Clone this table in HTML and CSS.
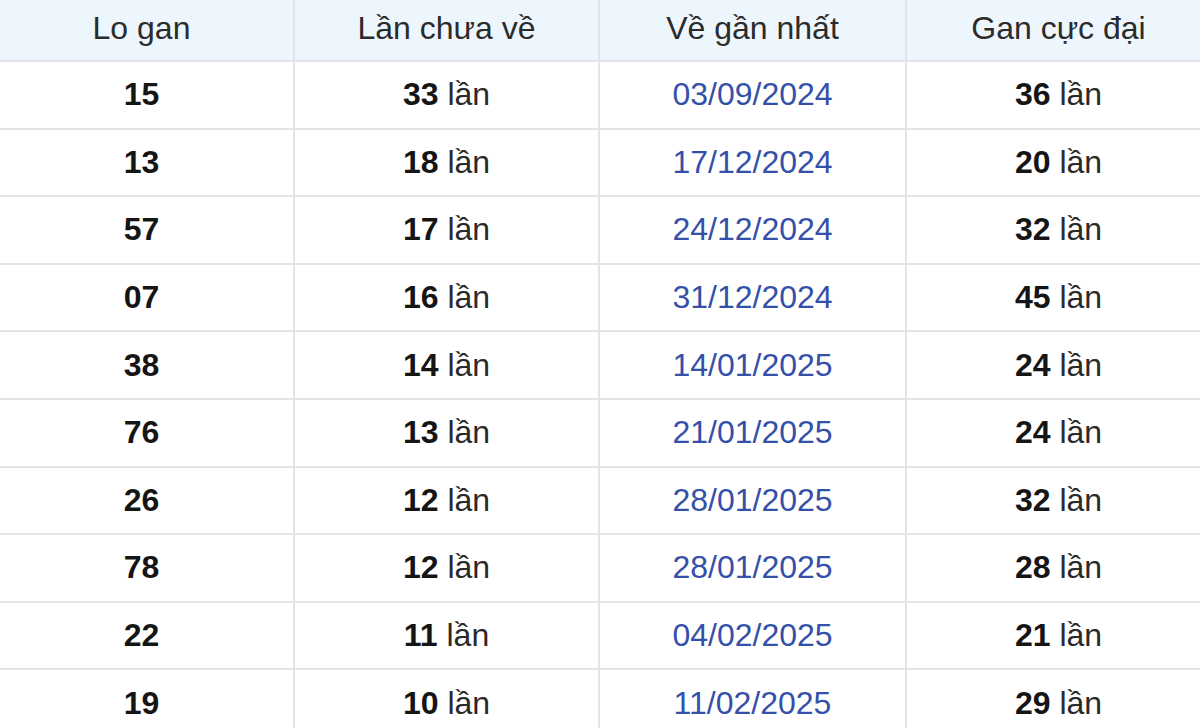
FILE: index.html
```html
<!DOCTYPE html>
<html lang="vi">
<head>
<meta charset="utf-8">
<link rel="stylesheet" href="styles.css">
</head>
<body>
<table class="gan">
  <colgroup>
    <col class="c1"><col class="c2"><col class="c3"><col class="c4">
  </colgroup>
  <thead>
    <tr><th>Lo gan</th><th>Lần chưa về</th><th>Về gần nhất</th><th>Gan cực đại</th></tr>
  </thead>
  <tbody>
    <tr><td><b>15</b></td><td><b>33</b> lần</td><td class="date">03/09/2024</td><td><b>36</b> lần</td></tr>
    <tr><td><b>13</b></td><td><b>18</b> lần</td><td class="date">17/12/2024</td><td><b>20</b> lần</td></tr>
    <tr><td><b>57</b></td><td><b>17</b> lần</td><td class="date">24/12/2024</td><td><b>32</b> lần</td></tr>
    <tr><td><b>07</b></td><td><b>16</b> lần</td><td class="date">31/12/2024</td><td><b>45</b> lần</td></tr>
    <tr><td><b>38</b></td><td><b>14</b> lần</td><td class="date">14/01/2025</td><td><b>24</b> lần</td></tr>
    <tr><td><b>76</b></td><td><b>13</b> lần</td><td class="date">21/01/2025</td><td><b>24</b> lần</td></tr>
    <tr><td><b>26</b></td><td><b>12</b> lần</td><td class="date">28/01/2025</td><td><b>32</b> lần</td></tr>
    <tr><td><b>78</b></td><td><b>12</b> lần</td><td class="date">28/01/2025</td><td><b>28</b> lần</td></tr>
    <tr><td><b>22</b></td><td><b>11</b> lần</td><td class="date">04/02/2025</td><td><b>21</b> lần</td></tr>
    <tr><td><b>19</b></td><td><b>10</b> lần</td><td class="date">11/02/2025</td><td><b>29</b> lần</td></tr>
  </tbody>
</table>
</body>
</html>
```

FILE: styles.css
```css
html, body {
  margin: 0;
  padding: 0;
  background: #ffffff;
  overflow: hidden;
}
body {
  width: 1200px;
  height: 728px;
  font-family: "Liberation Sans", Arial, sans-serif;
}
.gan {
  margin-left: -12px;
  width: 1222px;
  border-collapse: collapse;
  table-layout: fixed;
  font-size: 32px;
  color: #2a2a2a;
}
.gan .c1 { width: 305px; }
.gan .c2 { width: 305px; }
.gan .c3 { width: 307px; }
.gan .c4 { width: 305px; }
.gan th, .gan td {
  border: 2px solid #e1e5ea;
  text-align: center;
  padding: 0;
}
.gan th {
  height: 57px;
  padding-bottom: 3px;
  font-weight: normal;
  background: #eef6fd;
  color: #2b2b2b;
  border-top: none;
}
.gan td {
  height: 65.6px;
}
.gan b {
  color: #151515;
  font-weight: bold;
}
.gan .date {
  color: #3450a8;
}
```
